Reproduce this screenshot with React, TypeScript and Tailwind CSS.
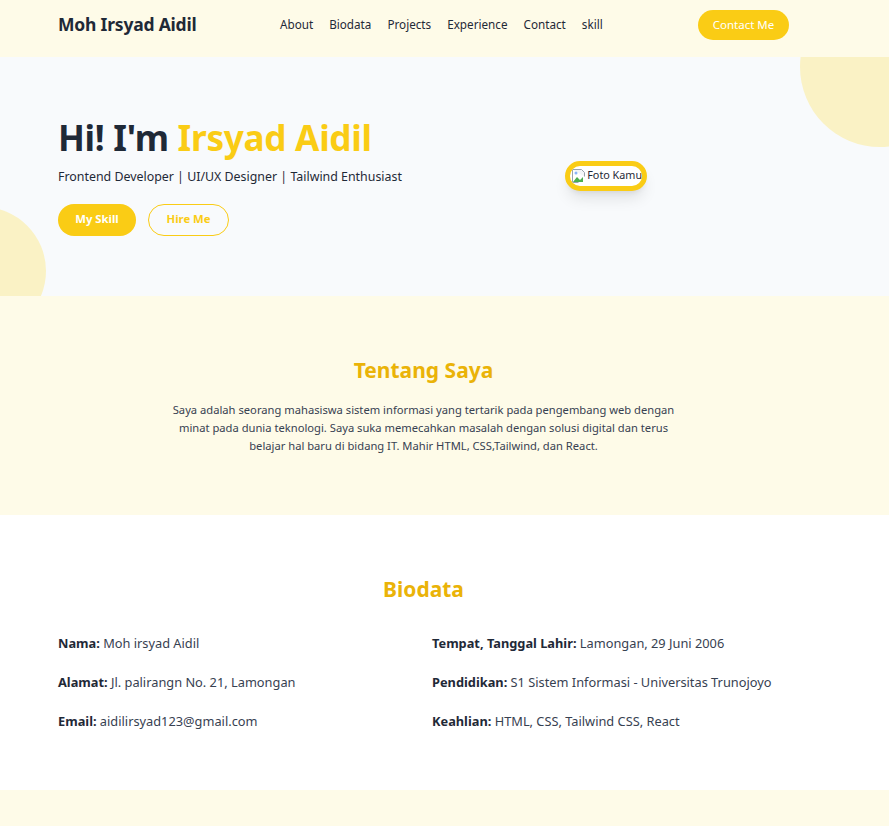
import React from "react";

const font = { fontFamily: '"Noto Sans", "Open Sans", sans-serif' };

function BrokenImg() {
  return (
    <svg width="16" height="16" viewBox="0 0 16 16" className="inline-block shrink-0">
      <path d="M1.5 1.5h9l3 3v4" fill="#f4f6f8" stroke="#9aa3ad" strokeWidth="1" />
      <path d="M1.5 1.5v13h6" fill="none" stroke="#9aa3ad" strokeWidth="1" />
      <path d="M2 14l4-5 3 3 3-3v5z" fill="#4caf50" />
      <circle cx="5" cy="5" r="1.5" fill="#8ab4f8" />
    </svg>
  );
}

export default function App() {
  return (
    <div className="min-h-[826px] bg-white text-[#1f2937]" style={font}>
      {/* Nav */}
      <nav className="bg-[#fefbe8] h-[57px]">
        <div className="ml-[58px] w-[731px] h-[49px] flex items-center">
          <div className="text-[17.5px] font-bold text-[#1f2937] w-[222px] tracking-[-0.2px]">Moh Irsyad Aidil</div>
          <ul className="flex gap-[16px] text-[11.7px] text-[#1f2937]">
            <li>About</li>
            <li>Biodata</li>
            <li>Projects</li>
            <li>Experience</li>
            <li>Contact</li>
            <li>skill</li>
          </ul>
          <button className="ml-auto h-[30px] w-[91px] rounded-full bg-[#facc15] text-white text-[11.5px]">Contact Me</button>
        </div>
      </nav>

      {/* Hero */}
      <section className="relative overflow-hidden bg-[#f8fafc] h-[239px]">
        <div className="absolute left-[800px] top-[-70px] w-[160px] h-[160px] rounded-full bg-[#faf2c5]" />
        <div className="absolute left-[-82px] top-[150px] w-[128px] h-[128px] rounded-full bg-[#faf2c5]" />
        <div className="relative ml-[58px] w-[731px] h-full flex items-center pb-[2px]">
          <div className="w-1/2 shrink-0">
            <h1 className="text-[35.2px] font-bold leading-[44px] tracking-[-0.3px] whitespace-nowrap">
              Hi! I'm <span className="text-[#facc15]">Irsyad Aidil</span>
            </h1>
            <p className="mt-[9px] text-[12.4px] text-[#1f2937] whitespace-nowrap">Frontend Developer | UI/UX Designer | Tailwind Enthusiast</p>
            <div className="mt-[17px] flex gap-3">
              <button className="h-[32px] w-[78px] rounded-full bg-[#facc15] text-white text-[11.3px] font-bold">My Skill</button>
              <button className="h-[32px] w-[81px] rounded-full border border-[#facc15] text-[#facc15] text-[11.3px] font-bold">Hire Me</button>
            </div>
          </div>
          <div className="w-1/2 flex justify-center">
            <div className="rounded-full border-[5px] border-[#facc15] shadow-lg bg-white h-[30px] w-[82px] flex items-center pl-[1px] text-[10.8px] text-[#1f2937] leading-none overflow-hidden whitespace-nowrap">
              <BrokenImg />
              <span>Foto Kamu</span>
            </div>
          </div>
        </div>
      </section>

      {/* Tentang */}
      <section className="bg-[#fefbe8] h-[219px] pt-[59px]">
        <div className="ml-[58px] w-[731px]">
          <h2 className="text-center text-[21px] font-bold text-[#eab308]">Tentang Saya</h2>
          <p className="mx-auto mt-[14px] w-[510px] text-center text-[11.2px] leading-[18px] text-[#374151]">
            Saya adalah seorang mahasiswa sistem informasi yang tertarik pada pengembang web dengan minat pada dunia teknologi. Saya suka memecahkan masalah dengan solusi digital dan terus belajar hal baru di bidang IT. Mahir HTML, CSS,Tailwind, dan React.
          </p>
        </div>
      </section>

      {/* Biodata */}
      <section className="bg-white h-[275px] pt-[59px]">
        <div className="ml-[58px] w-[731px]">
          <h2 className="text-center text-[21px] font-bold text-[#eab308]">Biodata</h2>
          <div className="mt-[28px] grid grid-cols-[374px_1fr] gap-y-[20px] text-[12.8px] leading-[19px] text-[#374151]">
            <p><b className="text-[#1f2937]">Nama:</b> Moh irsyad Aidil</p>
            <p><b className="text-[#1f2937]">Tempat, Tanggal Lahir:</b> Lamongan, 29 Juni 2006</p>
            <p><b className="text-[#1f2937]">Alamat:</b> Jl. palirangn No. 21, Lamongan</p>
            <p><b className="text-[#1f2937]">Pendidikan:</b> S1 Sistem Informasi - Universitas Trunojoyo</p>
            <p><b className="text-[#1f2937]">Email:</b> aidilirsyad123@gmail.com</p>
            <p><b className="text-[#1f2937]">Keahlian:</b> HTML, CSS, Tailwind CSS, React</p>
          </div>
        </div>
      </section>

      <section className="bg-[#fefbe8] h-[36px]" />
    </div>
  );
}
